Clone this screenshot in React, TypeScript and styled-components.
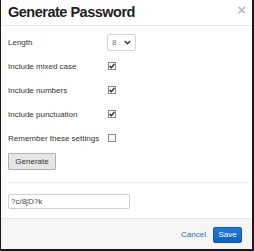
import React from "react";
import styled, { createGlobalStyle } from "styled-components";

const Global = createGlobalStyle`
  html, body { margin: 0; padding: 0; background: #fff; }
  body { font-family: "Liberation Sans", Arial, sans-serif; }
  * { box-sizing: border-box; }
`;

const Dialog = styled.div`
  width: 254px;
  height: 251px;
  display: flex;
  flex-direction: column;
  background: #fff;
  border-left: 1px solid #1a1a1a;
  border-right: 2px solid #1a1a1a;
  border-bottom: 2px solid #1a1a1a;
  font-family: "Liberation Sans", Arial, sans-serif;
  color: #333;
`;

const Header = styled.div`
  height: 26px;
  flex: none;
  display: flex;
  align-items: center;
  justify-content: space-between;
  padding: 0 6px 2px 7px;
  border-bottom: 1px solid #e8e8e8;
`;

const Title = styled.h1`
  margin: 0;
  font-size: 14.5px;
  font-weight: bold;
  letter-spacing: -0.5px;
  color: #222;
`;

const Close = styled.span`
  font-size: 15px;
  font-weight: 900;
  color: #bdbdbd;
  line-height: 1;
  margin-top: -4px;
`;

const Body = styled.div`
  flex: 1;
  display: flex;
  flex-direction: column;
  padding: 4px 4px 0 7px;
`;

const Row = styled.div`
  display: grid;
  grid-template-columns: 99px 1fr;
  align-items: center;
  height: 24px;
  font-size: 8px;
  color: #333;
`;

const Select = styled.div`
  width: 29px;
  height: 17px;
  border: 1px solid #d4d4d4;
  border-radius: 2px;
  display: flex;
  align-items: center;
  justify-content: space-between;
  padding: 0 4px 0 4px;
  font-size: 8px;
  color: #777;
`;

const Box = styled.span<{ $checked?: boolean }>`
  width: 8px;
  height: 8px;
  margin-left: 1px;
  border: 1px solid #8a8a8a;
  background: #fff;
  display: flex;
  align-items: center;
  justify-content: center;
`;

const Button = styled.button`
  align-self: flex-start;
  margin-top: 3px;
  width: 48px;
  height: 17px;
  padding: 0;
  font-family: "Liberation Sans", Arial, sans-serif;
  font-size: 8px;
  color: #333;
  background: #e6e6e6;
  border: 1px solid #b3b3b3;
  border-radius: 1px;
`;

const Divider = styled.hr`
  margin: 12px 0 0 1px;
  border: 0;
  border-top: 1px solid #ececec;
  width: 240px;
`;

const Field = styled.div`
  margin-top: 11px;
  width: 122px;
  height: 15px;
  border: 1px solid #cfcfcf;
  border-radius: 2px;
  display: flex;
  align-items: center;
  padding-left: 2px;
  font-size: 8px;
  color: #444;
`;

const Footer = styled.div`
  height: 31px;
  flex: none;
  display: flex;
  align-items: center;
  justify-content: flex-end;
  gap: 7px;
  padding: 1px 10px 0 0;
  background: #f5f5f5;
  border-top: 1px solid #e6e6e6;
`;

const LinkBtn = styled.span`
  font-size: 8px;
  color: #2f6db5;
`;

const Primary = styled.span`
  width: 29px;
  height: 16px;
  display: flex;
  align-items: center;
  justify-content: center;
  font-size: 8px;
  color: #fff;
  background: linear-gradient(#2278d6, #1262c0);
  border: 1px solid #0f58ad;
  border-radius: 2px;
`;

const Check = () => (
  <svg width="6" height="6" viewBox="0 0 6 6">
    <path d="M0.6 3.1 L2.3 4.8 L5.4 0.9" fill="none" stroke="#222" strokeWidth="1.4" />
  </svg>
);

const Chevron = () => (
  <svg width="7" height="5" viewBox="0 0 7 5">
    <path d="M0.8 1 L3.5 3.7 L6.2 1" fill="none" stroke="#333" strokeWidth="1.4" />
  </svg>
);

const options = [
  { label: "Include mixed case", checked: true },
  { label: "Include numbers", checked: true },
  { label: "Include punctuation", checked: true },
  { label: "Remember these settings", checked: false },
];

export default function App() {
  return (
    <>
      <Global />
      <Dialog>
        <Header>
          <Title>Generate Password</Title>
          <Close>×</Close>
        </Header>
        <Body>
          <Row>
            <span>Length</span>
            <Select>
              <span>8</span>
              <Chevron />
            </Select>
          </Row>
          {options.map((o) => (
            <Row key={o.label}>
              <span>{o.label}</span>
              <Box $checked={o.checked}>{o.checked && <Check />}</Box>
            </Row>
          ))}
          <Button>Generate</Button>
          <Divider />
          <Field>?c/8jD?k</Field>
        </Body>
        <Footer>
          <LinkBtn>Cancel</LinkBtn>
          <Primary>Save</Primary>
        </Footer>
      </Dialog>
    </>
  );
}
